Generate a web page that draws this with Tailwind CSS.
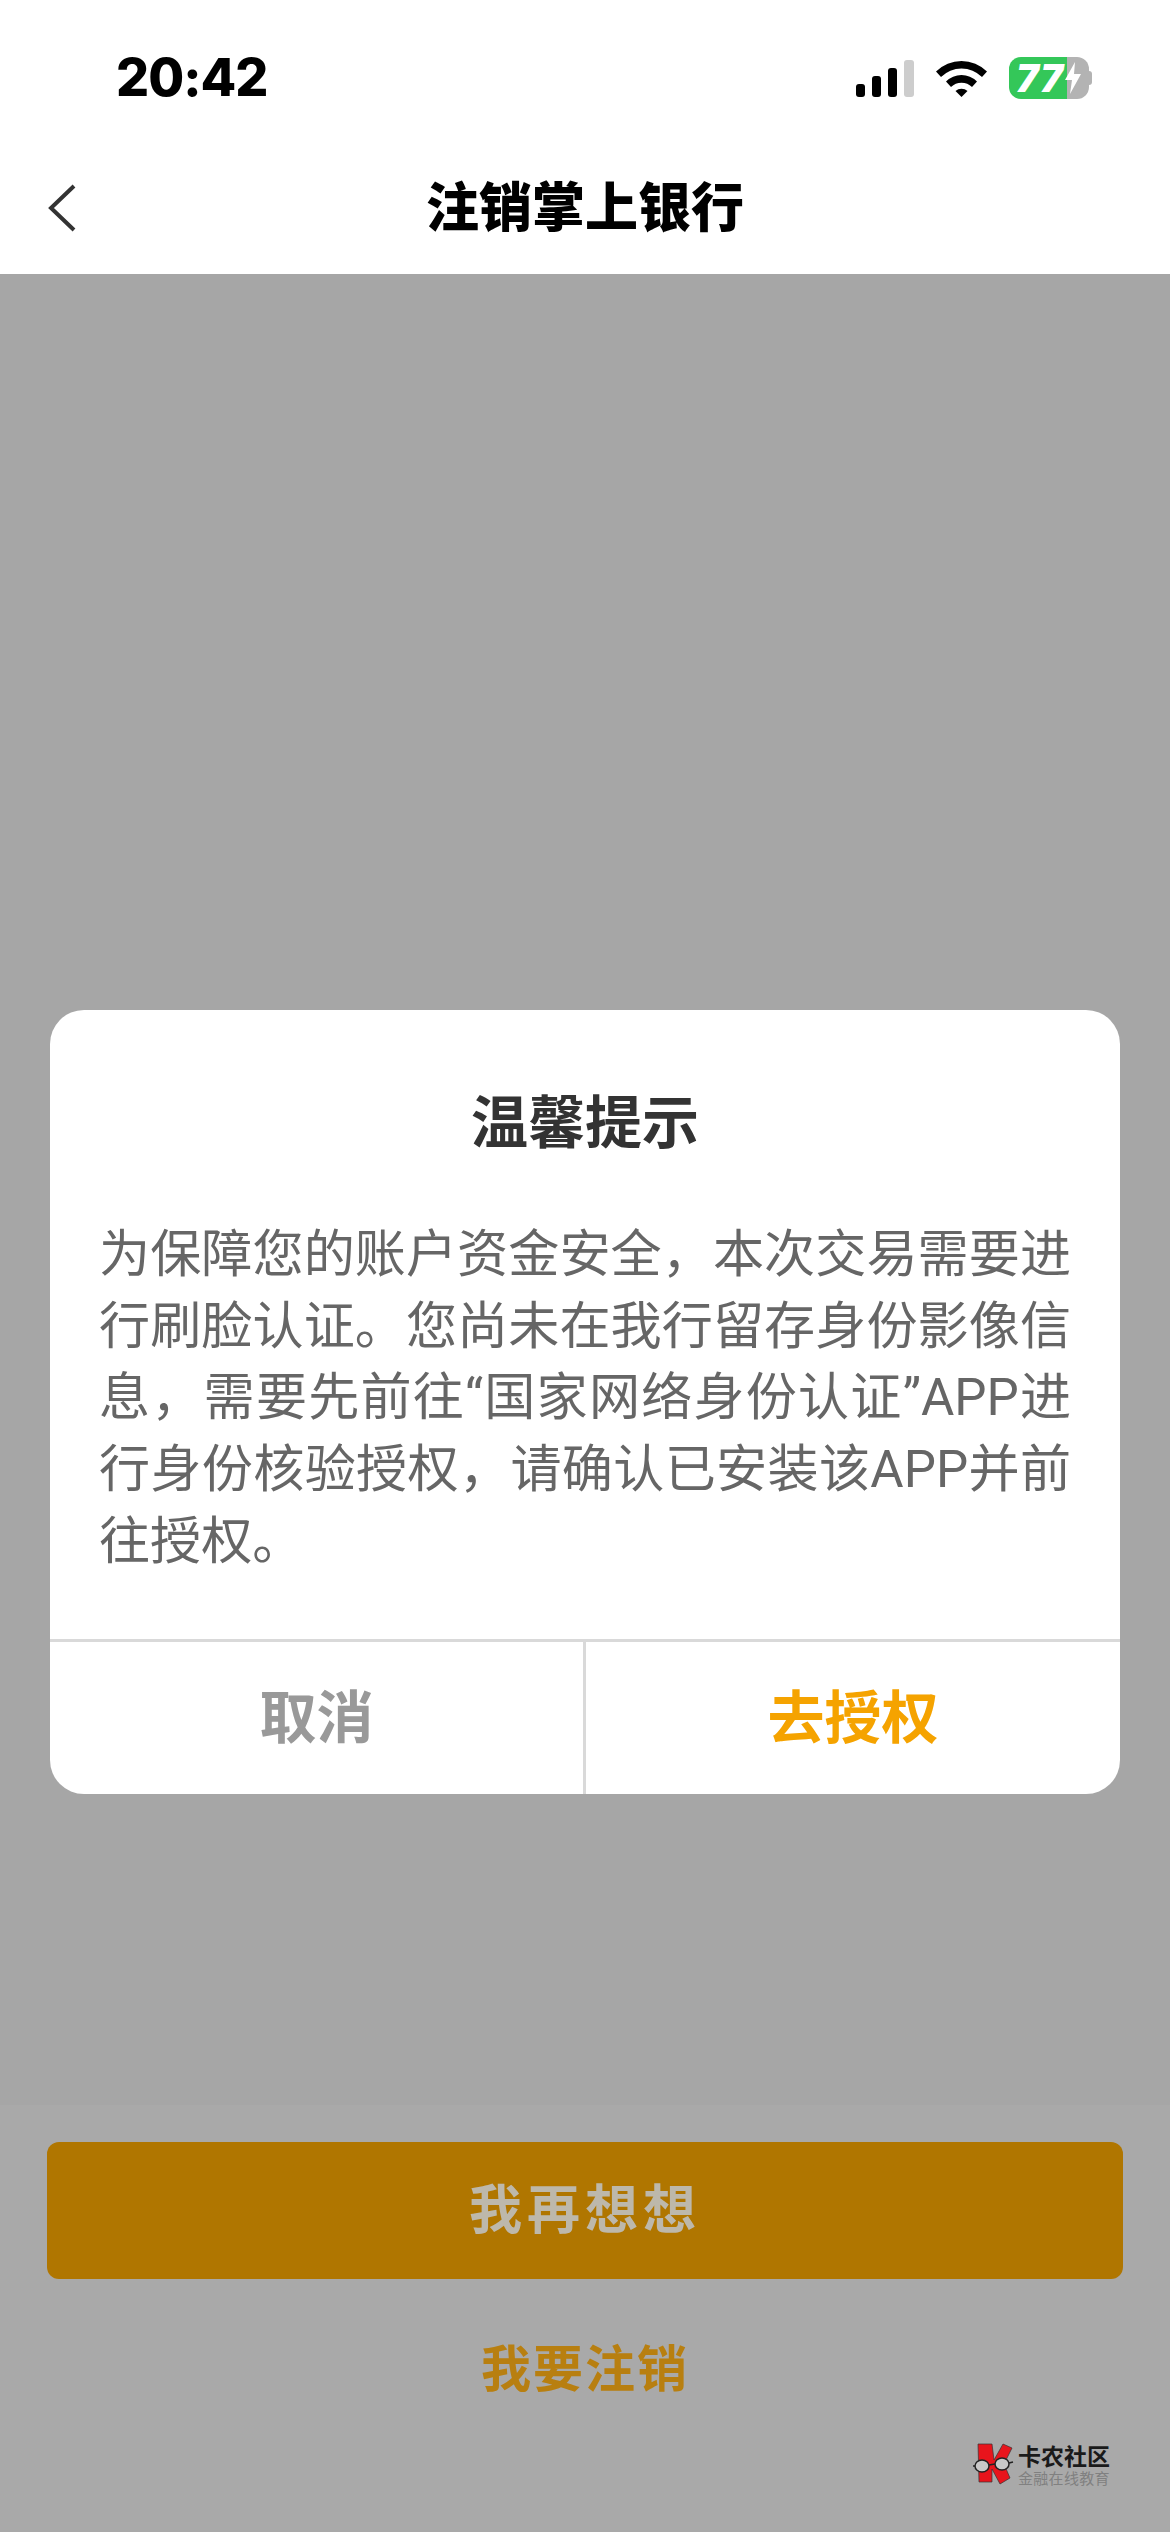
<!DOCTYPE html>
<html lang="zh-CN">
<head>
    <meta charset="UTF-8" />
    <title>注销掌上银行</title>
    <script src="https://cdn.jsdelivr.net/npm/@tailwindcss/browser@4"></script>
</head>
<body class="bg-[#a6a6a6] font-['Inter','Noto_Sans_CJK_SC',sans-serif]">

<div class="w-[1170px] h-[2532px] flex flex-col relative overflow-hidden">

    <!-- Status bar -->
    <div class="h-[150px] bg-white flex items-start justify-between pl-[116px] pr-[78px] pt-[50px] shrink-0">
        <span class="text-[52px] leading-[56px] font-extrabold text-black tracking-[-1px]">20:42</span>
        <div class="flex items-center gap-[22px] pt-[7px]">
            <svg width="58" height="37" viewBox="0 0 58 37">
                <rect x="0" y="24" width="9" height="13" rx="3" fill="#000" />
                <rect x="16" y="16" width="9" height="21" rx="3" fill="#000" />
                <rect x="32" y="8" width="9" height="29" rx="3" fill="#000" />
                <rect x="48" y="0" width="10" height="37" rx="3" fill="#cdcdcd" />
            </svg>
            <svg width="51" height="37" viewBox="0 0 51 37">
                <path d="M0 11.5 A36 36 0 0 1 51 11.5 L46 17 A29 29 0 0 0 5 17 Z" fill="#000" />
                <path d="M10 21.5 A22 22 0 0 1 41 21.5 L36 27 A15 15 0 0 0 15 27 Z" fill="#000" />
                <path d="M19.500 31 A9 9 0 0 1 31.500 31 L25.500 37 Z" fill="#000" />
            </svg>
            <div class="relative w-[83px] h-[42px] flex">
                <div class="w-[58px] h-full bg-[#34c759] rounded-l-[12px]"></div>
                <div class="w-[22px] h-full bg-[#b3b3b3] rounded-r-[12px]"></div>
                <div class="w-[3px] h-[14px] bg-[#b3b3b3] rounded-r-full self-center"></div>
                <span class="absolute left-[7px] top-0 text-[38px] leading-[42px] font-black italic text-white tracking-[1px]">77</span>
                <svg class="absolute left-[55px] top-[5px]" width="18" height="32" viewBox="0 0 18 32">
                    <path d="M11 0 L1 18 H8 L6 32 L17 12 H10 Z" fill="#fff" />
                </svg>
            </div>
        </div>
    </div>

    <!-- Nav bar -->
    <div class="h-[124px] bg-white relative flex items-center justify-center shrink-0">
        <svg class="absolute left-[48px] top-[34px]" width="28" height="48" viewBox="0 0 28 48">
            <path d="M26 2 L3 24 L26 46" fill="none" stroke="#333" stroke-width="4" />
        </svg>
        <h1 class="text-[53px] leading-[60px] font-black text-black pb-[8px]">注销掌上银行</h1>
    </div>

    <div class="flex-1"></div>

    <!-- Bottom actions -->
    <div class="h-[427px] bg-[#a9a9a9] px-[47px] pt-[37px] shrink-0 flex flex-col items-center">
        <button class="w-full h-[137px] bg-[#b07600] rounded-[12px] text-[53px] font-bold text-[#bdb8ab] tracking-[5px]">我再想想</button>
        <div class="mt-[60px] text-[50px] leading-[60px] font-bold text-[#b87f10] tracking-[2px]">我要注销</div>
    </div>

    <!-- Watermark -->
    <div class="absolute left-[973px] top-[2443px] flex gap-[4px]">
        <svg width="41" height="42" viewBox="0 0 41 42">
            <path d="M5 1 H19 L21 17 L30 1 L39 5 L31 21 L37 35 L27 41 L19 26 V39 H6 Z" fill="#e8141c" stroke="#333" stroke-width="0.700" />
            <ellipse cx="9" cy="23" rx="7" ry="6" fill="#c9c9c9" stroke="#222" stroke-width="1.500" />
            <ellipse cx="29" cy="21" rx="7" ry="6" fill="#c9c9c9" stroke="#222" stroke-width="1.500" />
            <path d="M16 22 L22 21 M2 23 H0 M36 20 L40 19" stroke="#222" stroke-width="1.500" />
        </svg>
        <div class="flex flex-col pt-[2px]">
            <span class="text-[23px] leading-[24px] font-bold text-[#1a1a1a]">卡农社区</span>
            <span class="text-[15px] leading-[17px] text-[#808080] mt-[1px] tracking-[0.3px]">金融在线教育</span>
        </div>
    </div>

    <!-- Dialog -->
    <div class="absolute left-[50px] top-[1010px] w-[1070px] h-[784px] bg-white rounded-[34px] flex flex-col overflow-hidden">
        <h2 class="text-center text-[57px] leading-[64px] font-bold text-[#333] pt-[81px] h-[139px] box-content">温馨提示</h2>
        <p class="px-[49px] mt-[-11px] text-[51.1px] leading-[71.7px] text-[#666] text-justify font-['Roboto','Noto_Sans_CJK_SC',sans-serif]">为保障您的账户资金安全&#65292;本次交易需要进行刷脸认证。您尚未在我行留存身份影像信息&#65292;需要先前往“国家网络身份认证”APP进行身份核验授权&#65292;请确认已安装该APP并前往授权。</p>
        <div class="mt-auto h-[155px] border-t-[3px] border-[#d9d9d9] flex">
            <button class="w-[536px] border-r-[3px] border-[#d9d9d9] text-[57px] font-bold text-[#999]">取消</button>
            <button class="flex-1 text-[57px] font-bold text-[#f5a300]">去授权</button>
        </div>
    </div>
</div>

</body>
</html>
